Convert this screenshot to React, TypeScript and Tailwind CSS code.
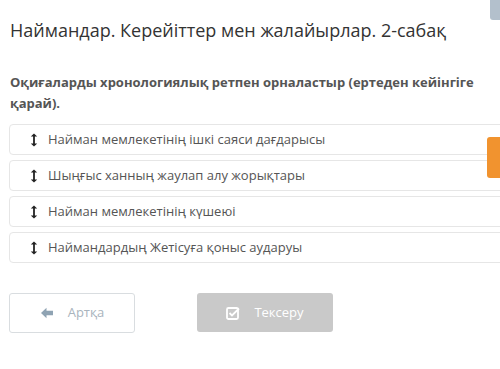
import React from "react";

const items = [
  "Найман мемлекетінің ішкі саяси дағдарысы",
  "Шыңғыс ханның жаулап алу жорықтары",
  "Найман мемлекетінің күшеюі",
  "Наймандардың Жетісуға қоныс аударуы",
];

function UpDown() {
  return (
    <svg width="8" height="14" viewBox="0 0 8 14" className="shrink-0">
      <path d="M4 2.5 V11.5" stroke="#222" strokeWidth="1.8" />
      <path d="M0.8 3.6 L4 0.6 L7.2 3.6 Z" fill="#222" />
      <path d="M0.8 10.4 L4 13.4 L7.2 10.4 Z" fill="#222" />
    </svg>
  );
}

export default function App() {
  return (
    <div
      className="relative w-[500px] h-[369px] overflow-hidden bg-white"
      style={{ fontFamily: '"Open Sans", "Noto Sans", sans-serif' }}
    >
      <div className="absolute right-0 top-0 w-[10px] h-[20px] rounded-bl-[3px] bg-[#b3c0cc]" />
      <div className="absolute right-0 top-[137px] w-[13px] h-[41px] rounded-l-[3px] bg-[#f1932f]" />
      <div className="pl-[10px] pt-[17px]">
        <h1 className="text-[18px] leading-[26px] text-[#333] font-normal">
          Наймандар. Керейіттер мен жалайырлар. 2-сабақ
        </h1>
        <p className="mt-[29px] text-[13px] leading-[21px] font-bold text-[#555] pr-[10px]">
          Оқиғаларды хронологиялық ретпен орналастыр (ертеден кейінгіге қарай).
        </p>
      </div>
      <div className="ml-[9px] mt-[10px] mr-[-10px] flex flex-col gap-[5px]">
        {items.map((t) => (
          <div
            key={t}
            className="h-[31px] flex items-center gap-[10px] pl-[20px] border border-[#e6e6e6] rounded-[4px] bg-white"
          >
            <UpDown />
            <span className="text-[13px] text-[#555]">{t}</span>
          </div>
        ))}
      </div>
      <div className="ml-[9px] mt-[30px] flex gap-[62px]">
        <div className="w-[126px] h-[40px] flex items-center justify-center gap-[14px] border border-[#d9dde0] rounded-[3px] bg-white">
          <svg width="14" height="12" viewBox="0 0 14 12">
            <path d="M1 6 L6.5 0.8 L6.5 3.8 L13 3.8 L13 8.2 L6.5 8.2 L6.5 11.2 Z" fill="#8fa3b3" />
          </svg>
          <span className="text-[13px] text-[#a9b4bd]">Артқа</span>
        </div>
        <div className="w-[136px] h-[39px] flex items-center justify-center gap-[14px] rounded-[3px] bg-[#c9c9c9]">
          <svg width="14" height="14" viewBox="0 0 14 14">
            <rect x="1" y="2" width="11" height="11" rx="1.5" fill="none" stroke="#fff" strokeWidth="1.8" />
            <path d="M3.5 7 L6 9.5 L13 2.5" fill="none" stroke="#fff" strokeWidth="1.8" />
          </svg>
          <span className="text-[13px] text-white">Тексеру</span>
        </div>
      </div>
    </div>
  );
}
